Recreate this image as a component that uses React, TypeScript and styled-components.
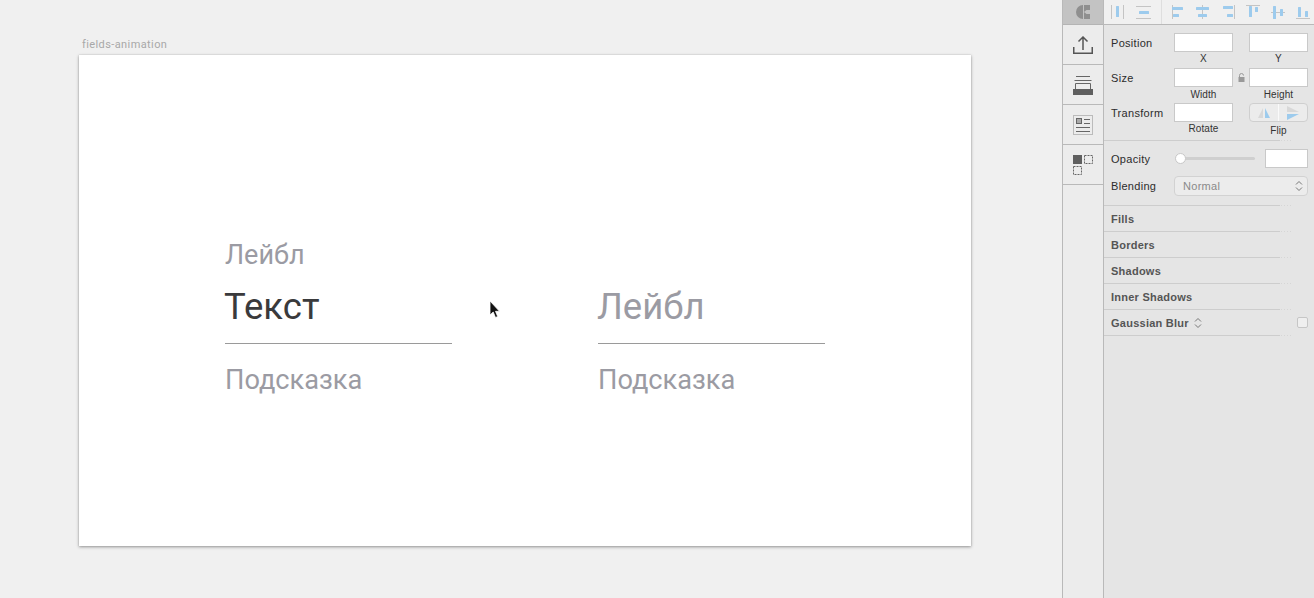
import styled, { createGlobalStyle } from "styled-components";

const Global = createGlobalStyle`
  html, body { margin: 0; padding: 0; height: 100%; overflow: hidden; }
  body { background: #f0f0f0; font-family: "Liberation Sans", Arial, sans-serif; }
`;

const Page = styled.div`
  display: flex;
  width: 1314px;
  height: 598px;
  overflow: hidden;
`;

const Canvas = styled.main`
  width: 1062px;
  flex: none;
  padding: 38px 0 0 79px;
  box-sizing: border-box;
`;

const ArtboardName = styled.div`
  height: 17px;
  padding-left: 3px;
  font: 11px/13px "Roboto", sans-serif;
  letter-spacing: 0.4px;
  color: #a8a8a8;
`;

const Artboard = styled.section`
  position: relative;
  width: 892px;
  height: 491px;
  background: #fff;
  box-shadow: 0 1px 3px rgba(0, 0, 0, 0.38), 0 0 1px rgba(0, 0, 0, 0.18);
  display: flex;
  gap: 146px;
  padding: 186px 0 0 146px;
  box-sizing: border-box;
`;

const Field = styled.div`
  width: 227px;
  font-family: "Roboto", sans-serif;
  color: #9b9ba3;
`;

const SmallLabel = styled.div`
  height: 29px;
  font-size: 27px;
  line-height: 29px;
`;

const Value = styled.div<{ $placeholder?: boolean }>`
  height: 74px;
  padding-top: 16px;
  box-sizing: border-box;
  font-size: 36.5px;
  line-height: 42px;
  text-indent: -1px;
  border-bottom: 1px solid #9a9a9a;
  color: ${(p) => (p.$placeholder ? "#9b9ba3" : "#3a3a3c")};
`;

const Hint = styled.div`
  margin-top: 20px;
  font-size: 27.2px;
  line-height: 32px;
`;

const Cursor = styled.svg`
  position: absolute;
  left: 410px;
  top: 246px;
`;

const Rail = styled.nav`
  width: 40px;
  flex: none;
  display: flex;
  flex-direction: column;
  background: #ececec;
  border-left: 1px solid #b9b9b9;
  border-right: 1px solid #b9b9b9;
`;

const RailTop = styled.div`
  height: 24px;
  background: #c3c3c3;
  border-bottom: 1px solid #b4b4b4;
  display: flex;
  align-items: center;
  justify-content: center;
`;

const RailItem = styled.div`
  height: 39px;
  border-bottom: 1px solid #b9b9b9;
  display: flex;
  align-items: center;
  justify-content: center;
`;

const Inspector = styled.aside`
  flex: 1;
  min-width: 0;
  background: #e5e5e5;
  font-size: 11px;
  letter-spacing: 0.3px;
  color: #2c2c2c;
`;

const AlignBar = styled.div`
  height: 24px;
  background: #f0f0f0;
  border-bottom: 1px solid #b9b9b9;
  display: flex;
  padding-left: 1px;
  overflow: hidden;
`;

const AlignIcon = styled.svg`
  width: 26px;
  height: 24px;
  flex: none;
`;

const BarSeparator = styled.span`
  width: 1px;
  flex: none;
  margin: 0 3px 0 4px;
  background: #dedede;
`;

const Transform = styled.div`
  display: grid;
  grid-template-columns: 63px 59px 16px 59px;
  grid-auto-rows: 35px;
  padding: 8px 6px 0 7px;
  height: 115px;
  box-sizing: border-box;
`;

const RowLabel = styled.div`
  line-height: 20px;
`;

const Cell = styled.div`
  display: flex;
  flex-direction: column;
  align-items: center;
`;

const NumberBox = styled.div<{ $width?: number }>`
  width: ${(p) => p.$width ?? 59}px;
  height: 19px;
  flex: none;
  background: #fff;
  border: 1px solid #c9c9c9;
  box-sizing: border-box;
`;

const Caption = styled.div<{ $drop?: number }>`
  font-size: 10px;
  line-height: 11px;
  margin-top: ${(p) => 1 + (p.$drop ?? 0)}px;
  letter-spacing: 0.1px;
  color: #333;
`;

const LockCell = styled.div`
  display: flex;
  justify-content: center;
  padding-top: 5px;
`;

const FlipGroup = styled.div`
  width: 59px;
  height: 19px;
  flex: none;
  display: flex;
  background: #ececec;
  border: 1px solid #cfcfcf;
  border-radius: 4px;
  box-sizing: border-box;
`;

const FlipPart = styled.div`
  flex: 1;
  display: flex;
  align-items: center;
  justify-content: center;
  & + & {
    border-left: 1px solid #fafafa;
  }
`;

const Divider = styled.div`
  height: 1px;
  width: 188px;
  background:
    linear-gradient(90deg, #cdcdcd 176px, transparent 176px),
    repeating-linear-gradient(90deg, #d6d6d6 0 1px, transparent 1px 3px);
`;

const OpacityRow = styled.div`
  display: flex;
  align-items: center;
  height: 19px;
  margin-top: 8px;
  padding: 0 6px 0 7px;
`;

const RowName = styled.div`
  width: 63px;
  flex: none;
`;

const Slider = styled.div`
  position: relative;
  width: 80px;
  height: 3px;
  margin: 0 10px 0 1px;
  border-radius: 2px;
  background: #cfcfcf;
`;

const Thumb = styled.span`
  position: absolute;
  left: 0;
  top: -4px;
  width: 11px;
  height: 11px;
  border-radius: 50%;
  background: #fff;
  border: 1px solid #c8c8c8;
  box-sizing: border-box;
`;

const BlendRow = styled.div`
  display: flex;
  align-items: center;
  height: 20px;
  margin: 8px 0 9px;
  padding: 0 6px 0 7px;
`;

const Select = styled.div`
  width: 134px;
  height: 20px;
  display: flex;
  align-items: center;
  justify-content: space-between;
  padding: 0 4px 0 8px;
  box-sizing: border-box;
  background: #ececec;
  border: 1px solid #d2d2d2;
  border-radius: 4px;
  color: #8a8a8a;
`;

const Section = styled.div`
  display: flex;
  align-items: center;
  justify-content: space-between;
  height: 25px;
  padding: 0 6px 0 7px;
  font-weight: 700;
  letter-spacing: 0.25px;
  color: #555;
`;

const SectionName = styled.div`
  display: flex;
  align-items: center;
  gap: 5px;
`;

const Checkbox = styled.span`
  width: 11px;
  height: 11px;
  flex: none;
  background: #efefef;
  border: 1px solid #c6c6c6;
  border-radius: 2px;
  box-sizing: border-box;
`;

const BLUE = "#9dcbed";
const GUIDE = "#c4c4c4";

// toolbar icons in a 26x24 box: grey guide lines plus blue bars
const distributeIcons = [
  { guides: ["M6.500 5v14", "M18.500 5v14"], bars: [[11, 6, 3, 11]] },
  { guides: ["M5 6.500h15", "M5 18.500h15"], bars: [[8, 11, 10, 3]] },
];
const alignIcons = [
  { guides: ["M7.500 5v14"], bars: [[7, 7, 11, 3], [8, 14, 6, 3]] },
  { guides: ["M11.500 5v14"], bars: [[5, 7, 13, 3], [7, 14, 9, 3]] },
  { guides: ["M17.500 5v14"], bars: [[6, 6, 10, 3], [10, 14, 6, 3]] },
  { guides: ["M3 5.500h14"], bars: [[6, 6, 3, 11], [12, 7, 3, 5]] },
  { guides: ["M2 12.500h14"], bars: [[4, 6, 3, 13], [11, 9, 3, 7]] },
  { guides: ["M1 18.500h14"], bars: [[3, 7, 3, 10], [10, 11, 3, 6]] },
];

type IconSpec = { guides: string[]; bars: number[][] };

function ToolIcon({ guides, bars }: IconSpec) {
  return (
    <AlignIcon viewBox="0 0 26 24">
      {guides.map((d) => (
        <path key={d} d={d} stroke={GUIDE} fill="none" />
      ))}
      {bars.map(([x, y, w, h]) => (
        <rect key={`${x}-${y}`} x={x} y={y} width={w} height={h} rx="0.500" fill={BLUE} />
      ))}
    </AlignIcon>
  );
}

function Updown() {
  return (
    <svg width="8" height="12" viewBox="0 0 8 12" fill="none" stroke="#777" strokeWidth="1">
      <path d="M1 4.500 4 1.500l3 3M1 7.500l3 3 3-3" />
    </svg>
  );
}

function Row({ label, a, b, lock, flip, drop }: { label: string; a: string; b: string; lock?: boolean; flip?: boolean; drop?: number }) {
  return (
    <>
      <RowLabel>{label}</RowLabel>
      <Cell>
        <NumberBox />
        <Caption $drop={flip ? 0 : drop}>{a}</Caption>
      </Cell>
      <LockCell>
        {lock && (
          <svg width="7" height="9" viewBox="0 0 7 9">
            <path d="M1.500 4V2.500a2 2 0 0 1 4 0" fill="none" stroke="#999" />
            <rect x="0.500" y="4" width="6" height="5" fill="#999" />
          </svg>
        )}
      </LockCell>
      <Cell>
        {flip ? (
          <FlipGroup>
            <FlipPart>
              <svg width="16" height="12" viewBox="0 0 16 12">
                <path d="M7 1v10H2z" fill="#d8d8d8" />
                <path d="M9 1v10h5z" fill={BLUE} />
              </svg>
            </FlipPart>
            <FlipPart>
              <svg width="16" height="14" viewBox="0 0 16 14">
                <path d="M2 0v6h12z" fill="#d8d8d8" />
                <path d="M2 8v6l12-6z" fill={BLUE} />
              </svg>
            </FlipPart>
          </FlipGroup>
        ) : (
          <NumberBox />
        )}
        <Caption $drop={drop}>{b}</Caption>
      </Cell>
    </>
  );
}

export default function App() {
  return (
    <Page>
      <Global />
      <Canvas>
        <ArtboardName>fields-animation</ArtboardName>
        <Artboard>
          <Field>
            <SmallLabel>Лейбл</SmallLabel>
            <Value>Текст</Value>
            <Hint>Подсказка</Hint>
          </Field>
          <Field>
            <SmallLabel />
            <Value $placeholder>Лейбл</Value>
            <Hint>Подсказка</Hint>
          </Field>
          <Cursor width="12" height="18" viewBox="0 0 12 18">
            <path d="M1 0v14l3.200-3 2.300 5.500 2.200-1-2.200-5.200H10.500z" fill="#111" stroke="#fff" strokeWidth="0.800" />
          </Cursor>
        </Artboard>
      </Canvas>

      <Rail>
        <RailTop>
          <svg width="14" height="14" viewBox="0 0 14 14" fill="#8f8f8f">
            <path d="M7 0A7 7 0 0 0 7 14z" />
            <path d="M8 0h6v5h-3.500L8 7zM8 14h6V9h-3.500L8 7z" />
          </svg>
        </RailTop>
        <RailItem>
          <svg width="20" height="18" viewBox="0 0 20 18" fill="none" stroke="#555" strokeWidth="1.500">
            <path d="M.75 11v6.250h18.500V11M10 14V1M5.500 5.500 10 1l4.500 4.500" />
          </svg>
        </RailItem>
        <RailItem>
          <svg width="20" height="20" viewBox="0 0 20 20">
            <path d="M3 1.500h14M1.500 5.500h17M2.500 14V8.500h15V14" fill="none" stroke="#666" />
            <rect x="0" y="14" width="20" height="6" fill="#5f5f5f" />
          </svg>
        </RailItem>
        <RailItem>
          <svg width="20" height="20" viewBox="0 0 20 20">
            <rect x="0.500" y="0.500" width="19" height="19" fill="none" stroke="#8a8a8a" strokeDasharray="1 1" />
            <rect x="3.500" y="3.500" width="5" height="5" fill="#aaa" stroke="#666" />
            <path d="M11 4.500h6M11 8.500h6M3 12.500h14M3 16.500h14" stroke="#666" />
          </svg>
        </RailItem>
        <RailItem>
          <svg width="20" height="20" viewBox="0 0 20 20">
            <rect x="0" y="0" width="9" height="9" fill="#5f5f5f" />
            <path d="M11.500.5h8v8h-8zM.5 11.500h8v8h-8z" fill="none" stroke="#666" strokeDasharray="2 1" />
          </svg>
        </RailItem>
      </Rail>

      <Inspector>
        <AlignBar>
          {distributeIcons.map((icon) => (
            <ToolIcon key={icon.guides[0]} {...icon} />
          ))}
          <BarSeparator />
          {alignIcons.map((icon) => (
            <ToolIcon key={icon.guides[0]} {...icon} />
          ))}
        </AlignBar>

        <Transform>
          <Row label="Position" a="X" b="Y" />
          <Row label="Size" a="Width" b="Height" lock drop={1} />
          <Row label="Transform" a="Rotate" b="Flip" flip drop={2} />
        </Transform>
        <Divider />

        <OpacityRow>
          <RowName>Opacity</RowName>
          <Slider>
            <Thumb />
          </Slider>
          <NumberBox $width={43} />
        </OpacityRow>
        <BlendRow>
          <RowName>Blending</RowName>
          <Select>
            Normal
            <Updown />
          </Select>
        </BlendRow>
        <Divider />

        {["Fills", "Borders", "Shadows", "Inner Shadows"].map((name) => (
          <div key={name}>
            <Section>{name}</Section>
            <Divider />
          </div>
        ))}
        <Section>
          <SectionName>
            Gaussian Blur
            <Updown />
          </SectionName>
          <Checkbox />
        </Section>
        <Divider />
      </Inspector>
    </Page>
  );
}
